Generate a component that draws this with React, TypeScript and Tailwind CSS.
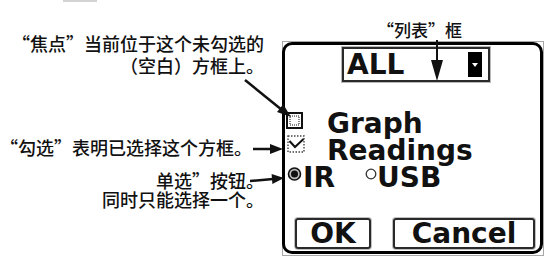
import React from "react";

const cjk = "font-['Noto_Sans_CJK_SC',sans-serif] font-medium";

function CheckboxFocused() {
  return (
    <svg width="17" height="17" viewBox="0 0 17 17" className="shrink-0">
      <rect x="1" y="1" width="15" height="15" fill="white" stroke="#111" strokeWidth="2" />
      <rect x="4" y="4" width="9" height="9" fill="none" stroke="#111" strokeWidth="1" strokeDasharray="1 1" />
    </svg>
  );
}

function CheckboxChecked() {
  return (
    <svg width="18" height="18" viewBox="0 0 18 18" className="shrink-0">
      <rect x="1" y="1" width="16" height="16" fill="white" stroke="#444" strokeWidth="1.4" strokeDasharray="1.5 1.5" />
      <path d="M2.5 6 L8 12 L16.5 4" fill="none" stroke="#111" strokeWidth="2" />
    </svg>
  );
}

function RadioOn() {
  return (
    <svg width="17" height="14" viewBox="0 0 17 14" className="shrink-0">
      <circle cx="8.5" cy="7" r="6" fill="#bbb" stroke="#111" strokeWidth="1.6" />
      <circle cx="8.5" cy="7" r="3.5" fill="#111" />
    </svg>
  );
}

function RadioOff() {
  return (
    <svg width="12" height="12" viewBox="0 0 12 12" className="shrink-0">
      <circle cx="6" cy="6" r="4.8" fill="white" stroke="#333" strokeWidth="1.3" />
    </svg>
  );
}

export default function App() {
  return (
    <div className="relative w-[554px] h-[264px] bg-white overflow-hidden text-[#111]">
      <div className="absolute left-[63px] top-0 w-[34px] h-[2px] bg-[#d4d4d4]" />

      {/* annotations */}
      <div className={`absolute right-[290px] top-[32px] text-right text-[18px] leading-[22px] whitespace-nowrap ${cjk}`}>
        <div>“焦点”当前位于这个未勾选的</div>
        <div>（空白）方框上。</div>
      </div>
      <div className={`absolute left-0 top-[136px] text-[18px] leading-[22px] whitespace-nowrap ${cjk}`}>
        <div>“勾选”表明已选择这个方框。</div>
      </div>
      <div className={`absolute right-[290px] top-[171px] text-right text-[18px] leading-[19px] whitespace-nowrap ${cjk}`}>
        <div>单选”按钮。</div>
        <div>同时只能选择一个。</div>
      </div>
      <div className={`absolute left-[377px] top-[21px] text-[17px] leading-[17px] whitespace-nowrap ${cjk}`}>
        “列表”框
      </div>

      {/* device screen */}
      <div className="absolute left-[282px] top-[41px] w-[262px] h-[215px] border border-[#a8a8a8]">
        <div className="absolute left-[-1px] top-0 w-[261px] h-[212px] border-[3px] border-black rounded-[10px] flex flex-col font-['DejaVu_Sans',sans-serif] font-bold text-[#111]">
          <div className="ml-[57px] mt-[2px] w-[148px] h-[35px] border-2 border-[#2a2a2a] shadow-[0_0_0_1px_#b8b8b8] flex items-center justify-between pl-[3px] pr-[6px]">
            <span className="text-[28px] leading-none">ALL</span>
            <div className="w-[14px] h-[25px] bg-black flex items-center justify-center">
              <div className="w-0 h-0 border-l-[3px] border-r-[3px] border-t-[4px] border-l-transparent border-r-transparent border-t-white" />
            </div>
          </div>

          <div className="mt-[28px] flex flex-col text-[28px] leading-[27px]">
            <div className="flex items-start h-[27px] pl-[1px]">
              <div className="mt-[2px]"><CheckboxFocused /></div>
              <span className="ml-[24px]">Graph</span>
            </div>
            <div className="flex items-start h-[27px] pl-[2px]">
              <div className="mt-[-2px]"><CheckboxChecked /></div>
              <span className="ml-[22px]">Readings</span>
            </div>
            <div className="flex items-start h-[27px] pl-[1px]">
              <div className="mt-[3px]"><RadioOn /></div>
              <span className="ml-[0px]">IR</span>
              <div className="ml-[30px] mt-[4px]"><RadioOff /></div>
              <span className="ml-[0px]">USB</span>
            </div>
          </div>

          <div className="mt-auto mb-[2px] flex items-center pl-[10px]">
            <div className="w-[76px] h-[31px] border-2 border-[#2a2a2a] rounded-[3px] shadow-[0_0_0_1px_#c0c0c0] flex items-center justify-center text-[28px] leading-none">
              OK
            </div>
            <div className="ml-[22px] w-[142px] h-[31px] border-2 border-[#2a2a2a] rounded-[3px] shadow-[0_0_0_1px_#c0c0c0] flex items-center justify-center text-[28px] leading-none">
              Cancel
            </div>
          </div>
        </div>
      </div>

      {/* arrows */}
      <svg className="absolute inset-0 pointer-events-none" width="554" height="264" viewBox="0 0 554 264">
        <g stroke="#111" strokeWidth="2.5" fill="#111">
          <line x1="245" y1="80" x2="282" y2="110" />
          <polygon stroke="none" points="291,117 277,112.1 283.2,104.3" />
          <line x1="253" y1="149" x2="273" y2="149" />
          <polygon stroke="none" points="283,149 270,144 270,154" />
          <line x1="250" y1="181" x2="273" y2="179" />
          <polygon stroke="none" points="284,178 272.4,184 271.6,174" />
          <line x1="437" y1="40" x2="437" y2="62" strokeWidth="2" />
          <polygon stroke="none" points="437,81 431,60 443,60" />
        </g>
      </svg>
    </div>
  );
}
